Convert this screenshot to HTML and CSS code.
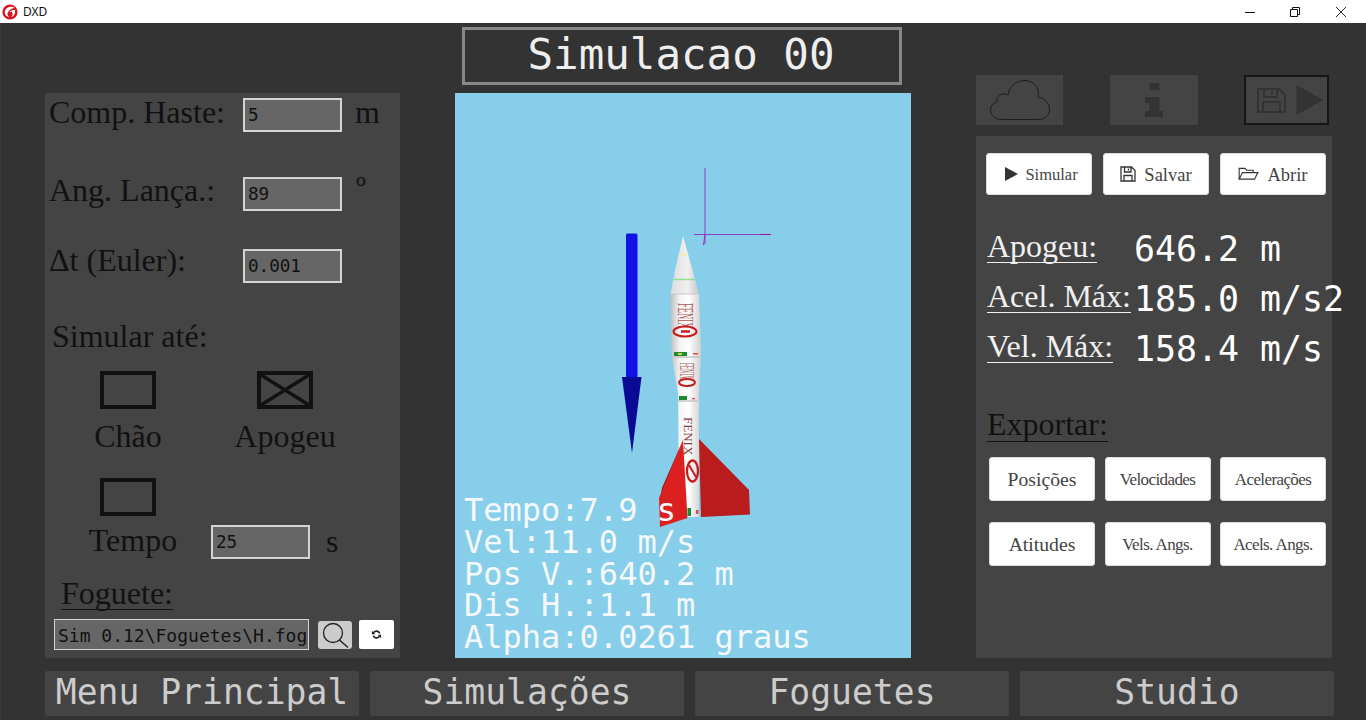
FILE: index.html
```html
<!DOCTYPE html>
<html lang="pt">
<head>
<meta charset="utf-8">
<title>DXD</title>
<link rel="stylesheet" href="styles.css">
</head>
<body>
<header class="titlebar">
  <svg class="app-logo" viewBox="0 0 16 16"><circle cx="8" cy="8" r="7.6" fill="#d8141c"/><path d="M12.500 3.300C8.500 1.600 3.400 3.600 2.800 7.800 2.500 10.500 4.400 12.800 7.200 13.300 5.500 11.700 5 9.700 6 8 7 6.100 9.600 4.900 12.500 3.300Z" fill="#fff"/><path d="M12.800 5.800C13.800 9 12.200 12.300 9 13.300 10.600 11.800 11 9.600 10.100 8 9.500 7.400 8 7.900 7 8.600 8.400 6.500 11 5.900 12.800 5.800Z" fill="#fff"/></svg>
  <span class="app-name">DXD</span>
  <div class="win-controls">
    <svg class="win-btn" viewBox="0 0 10 10"><path d="M0 5.500H10" stroke="#111" fill="none"/></svg>
    <svg class="win-btn" viewBox="0 0 10 10"><path d="M.5 2.500H7.500V9.500H.5ZM2.500 2.500V.5H9.500V7.500H7.500" stroke="#111" fill="none"/></svg>
    <svg class="win-btn win-close" viewBox="0 0 10 10"><path d="M0 0L10 10M10 0L0 10" stroke="#111" stroke-width=".9" fill="none"/></svg>
  </div>
</header>

<main class="app">
  <div class="columns">
    <section class="left-panel">
      <div class="field">
        <label class="field-label">Comp. Haste:</label>
        <div class="input">5</div>
        <span class="unit">m</span>
      </div>
      <div class="field field-angle">
        <label class="field-label">Ang. Lança.:</label>
        <div class="input">89</div>
        <span class="unit unit-deg">º</span>
      </div>
      <div class="field field-dt">
        <label class="field-label">Δt (Euler):</label>
        <div class="input">0.001</div>
      </div>
      <div class="sim-until">Simular até:</div>
      <div class="targets">
        <div class="target">
          <div class="check"></div>
          <div class="target-label">Chão</div>
        </div>
        <div class="target">
          <div class="check">
            <svg class="check-x" viewBox="0 0 48 30" preserveAspectRatio="none"><path d="M0 0L48 30M48 0L0 30" stroke="#111" stroke-width="3.600" fill="none"/></svg>
          </div>
          <div class="target-label">Apogeu</div>
        </div>
      </div>
      <div class="targets targets-time">
        <div class="target">
          <div class="check"></div>
          <div class="target-label target-label-time">Tempo</div>
        </div>
        <div class="input input-time">25</div>
        <span class="unit unit-s">s</span>
      </div>
      <div class="rocket-title"><span class="underlined">Foguete:</span></div>
      <div class="file-row">
        <div class="input input-file">Sim 0.12\Foguetes\H.fog</div>
        <button class="search-btn" type="button" aria-label="Procurar">
          <svg viewBox="0 0 34 28" width="34" height="28"><circle cx="15" cy="12" r="9.500" fill="none" stroke="#222" stroke-width="1.300"/><path d="M21.500 19L30 26.500" stroke="#222" stroke-width="1.500"/></svg>
        </button>
        <button class="refresh-btn" type="button" aria-label="Atualizar">
          <svg viewBox="0 0 12 12" width="11" height="11"><path d="M10.400 4.600A4.600 4.600 0 0 0 2.300 3.300L1 2v3.600h3.600L3.400 4.400A3 3 0 0 1 8.600 5ZM1.600 7.400A4.600 4.600 0 0 0 9.700 8.700L11 10V6.400H7.400L8.600 7.600A3 3 0 0 1 3.400 7Z" fill="#222"/></svg>
        </button>
      </div>
    </section>

    <section class="center">
      <h1 class="sim-title">Simulacao 00</h1>
      <div class="scene">
        <svg class="scene-art" viewBox="455 93 456 565">
          <defs>
            <linearGradient id="body" x1="0" x2="1" y1="0" y2="0">
              <stop offset="0" stop-color="#bdbdbd"/><stop offset=".3" stop-color="#f4f4f4"/><stop offset=".6" stop-color="#fff"/><stop offset="1" stop-color="#cfcfcf"/>
            </linearGradient>
            <linearGradient id="nose" x1="0" x2="1" y1="0" y2="0">
              <stop offset="0" stop-color="#dcdcdc"/><stop offset=".6" stop-color="#f0f0f0"/><stop offset="1" stop-color="#c8c8c8"/>
            </linearGradient>
          </defs>
          <path d="M705 168V244M694 234.500H771" stroke="#8c3fc0" stroke-width="1" fill="none"/>
          <path d="M705 234L703.500 245" stroke="#b020c0" fill="none"/>
          <path d="M760 234.500H771" stroke="#a01098" fill="none"/>
          <rect x="626" y="233.500" width="11.500" height="144" rx="1.500" fill="#1212e6"/>
          <path d="M622 377H641.500L632 453Z" fill="#0a0a94"/>
          <path d="M683 236L687 250 699 294H670.500L676 266Z" fill="url(#nose)"/>
          <path d="M680 254.500H687" stroke="#f0ee90" stroke-width="1.300"/>
          <path d="M673.500 279.500H695" stroke="#90e090" stroke-width="1.500"/>
          <path d="M670.500 294H699L701 350V355L699 393V517H679L678 393 671.500 355V350Z" fill="url(#body)"/>
          <path d="M670.500 294H699" stroke="#c8c8c8"/>
          <path d="M672 357H701M678 401H698" stroke="#c4c4c4" stroke-width="1.500"/>
          <text class="tex" transform="translate(678 303) rotate(90) scale(.36 1)">FENIX</text>
          <ellipse cx="685" cy="331.500" rx="11.500" ry="5" fill="none" stroke="#c81c1c" stroke-width="2"/>
          <path d="M681 331.500L690 331.500" stroke="#c81c1c" stroke-width="2.500"/>
          <text class="tex tex-mid" transform="translate(680 363) rotate(90) scale(.27 1)">FENIX</text>
          <ellipse cx="687" cy="382.500" rx="8" ry="3.500" fill="none" stroke="#c81c1c" stroke-width="2"/>
          <rect x="674" y="352" width="13" height="4" fill="#1c8c34"/>
          <rect x="678" y="353" width="4" height="2" fill="#d8d040"/>
          <rect x="679" y="396" width="8" height="4" fill="#1c8c34"/>
          <rect x="693" y="353" width="5" height="1.500" fill="#e04848"/>
          <rect x="692" y="398" width="3" height="1.300" fill="#e04848"/>
          <text class="tex tex-fenix" transform="translate(684 417) rotate(90)">FENIX</text>
          <ellipse cx="692.500" cy="471" rx="5.500" ry="10.500" fill="none" stroke="#c81c1c" stroke-width="2.300"/>
          <path d="M689 465L696 477" stroke="#c81c1c" stroke-width="2"/>
          <path d="M699 439L749 490 750 514.500 701 517Z" fill="#b81c1c"/>
          <path d="M683 440L662 488 660 500Z" fill="#8e1616"/>
          <path d="M683 440L687.500 518 660 527 659 498Z" fill="#dc2020"/>
          <rect x="687.500" y="508" width="3.500" height="8" fill="#1c8c34"/>
          <rect x="696" y="510" width="2.500" height="4" fill="#e04848"/>
        </svg>
        <div class="readout">
          <div>Tempo:7.9 s</div>
          <div>Vel:11.0 m/s</div>
          <div>Pos V.:640.2 m</div>
          <div>Dis H.:1.1 m</div>
          <div>Alpha:0.0261 graus</div>
        </div>
      </div>
    </section>

    <section class="right">
      <div class="tool-row">
        <div class="tool tool-cloud">
          <svg viewBox="0 0 60 40" width="60" height="40"><path d="M12 39.500C5 39.500 .5 35 .5 30 .5 26 3 23 7 22 6 18 9 14 14 14 16 14 17 14.500 18 15 19 6 27 .5 35 .5 44 .5 50 8 48 17 54 18 59.500 23 59.500 30 59.500 35 55 39.500 49 39.500Z" fill="none" stroke="#1c1c1c" stroke-width="1"/></svg>
        </div>
        <div class="tool tool-info">
          <svg viewBox="0 0 18 34" width="18" height="34"><path d="M4.300 0H14.300V7H4.300ZM0 14H14.300V28H18V34H0V28H4.300V20H0Z" fill="#333"/></svg>
        </div>
        <div class="tool tool-run">
          <svg viewBox="0 0 78 46" width="78" height="46"><path d="M10 12H31L37 18V35H10ZM16 12V20H29V12M24 14V18M15 35V25H32V35" fill="none" stroke="#333" stroke-width="2"/><path d="M48.500 8L75.500 23 48.500 38Z" fill="#333"/></svg>
        </div>
      </div>
      <div class="right-panel">
        <div class="actions">
          <button class="btn btn-sim" type="button">
            <svg viewBox="0 0 14 14" width="14" height="14"><path d="M1 0L14 7 1 14Z" fill="#333"/></svg>
            <span>Simular</span>
          </button>
          <button class="btn btn-act" type="button">
            <svg viewBox="0 0 16 16" width="16" height="16"><path d="M1 1H11.500L15 4.500V15H1ZM4.500 1V6H11V1M8.500 2.500V4.500M4 15V9.500H12V15" fill="none" stroke="#333" stroke-width="1.300"/></svg>
            <span>Salvar</span>
          </button>
          <button class="btn btn-act" type="button">
            <svg viewBox="0 0 22 15" width="21" height="14"><path d="M1 13V1.500H7L9 3.500H16V6M1 13L4.500 6H21L17.500 13Z" fill="none" stroke="#333" stroke-width="1.200"/></svg>
            <span>Abrir</span>
          </button>
        </div>
        <dl class="stats">
          <div class="stat"><dt><span class="underlined">Apogeu:</span></dt><dd>646.2 m</dd></div>
          <div class="stat"><dt><span class="underlined">Acel. Máx:</span></dt><dd>185.0 m/s2</dd></div>
          <div class="stat"><dt><span class="underlined">Vel. Máx:</span></dt><dd>158.4 m/s</dd></div>
        </dl>
        <div class="export-title"><span class="underlined">Exportar:</span></div>
        <div class="export-grid">
          <button class="btn btn-big" type="button">Posições</button>
          <button class="btn btn-small" type="button">Velocidades</button>
          <button class="btn btn-small" type="button">Acelerações</button>
          <button class="btn btn-big" type="button">Atitudes</button>
          <button class="btn btn-small" type="button">Vels. Angs.</button>
          <button class="btn btn-small" type="button">Acels. Angs.</button>
        </div>
      </div>
    </section>
  </div>

  <nav class="menu">
    <div class="menu-item">Menu Principal</div>
    <div class="menu-item">Simulações</div>
    <div class="menu-item">Foguetes</div>
    <div class="menu-item">Studio</div>
  </nav>
</main>
</body>
</html>
```

FILE: styles.css
```css
* { box-sizing: border-box; }
html, body { margin: 0; padding: 0; }
body {
  width: 1366px;
  height: 720px;
  overflow: hidden;
  background: #333;
  font-family: "Liberation Serif", serif;
  color: #111;
}

.titlebar {
  height: 23px;
  background: #fff;
  display: flex;
  align-items: center;
  padding-left: 2px;
}
.app-logo { width: 16px; height: 16px; }
.app-name {
  margin-left: 5px;
  font: 12px "Noto Sans", sans-serif;
  color: #111;
}
.win-controls {
  margin-left: auto;
  margin-right: 20px;
  display: flex;
  gap: 35px;
}
.win-btn { width: 10px; height: 10px; display: block; }
.win-close { margin-left: 1px; }

.app {
  height: 697px;
  padding-left: 45px;
  border-left: 1px solid #333c3c;
}
.columns { display: flex; height: 635px; margin-left: -1px; }

/* Left panel */
.left-panel {
  width: 355px;
  height: 565px;
  margin-top: 70px;
  padding-top: 5px;
  background: #444;
  font-size: 32px;
  line-height: 36px;
}
.field { display: flex; height: 34px; align-items: center; }
.field-angle { margin-top: 45px; }
.field-dt { margin-top: 38px; }
.field-label { width: 198px; padding-left: 4px; position: relative; top: -3px; }
.field-angle .field-label { top: -4px; }
.field-dt .field-label { top: -6px; }
.input {
  background: #666;
  border: 2px solid #d4d4d4;
  font: 17.600px/30px "DejaVu Sans Mono", monospace;
  color: #111;
  padding-left: 3px;
  width: 99px;
  height: 34px;
}
.unit { margin-left: 13px; position: relative; top: -3px; }
.unit-deg { top: -6px; margin-left: 14px; }
.sim-until { margin-top: 35px; padding-left: 7px; }

.targets { display: flex; gap: 57px; padding-left: 33px; margin-top: 17px; }
.target { width: 100px; display: flex; flex-direction: column; align-items: center; }
.check {
  width: 56px;
  height: 38px;
  border: 4px solid #111;
  position: relative;
}
.check-x { position: absolute; inset: 0; width: 100%; height: 100%; display: block; }
.target-label { margin-top: 9px; }
.target-label-time { margin-top: 6px; padding-left: 10px; }
.targets-time { gap: 0; margin-top: 24px; align-items: flex-end; }
.input-time { margin-left: 33px; margin-bottom: -1px; }
.unit-s { margin-left: 16px; top: 0; line-height: 34px; }

.rocket-title { margin-top: 19px; padding-left: 16px; line-height: 32px; height: 33px; }
.underlined { display: inline-block; border-bottom: 1px solid currentColor; }
.file-row { display: flex; align-items: center; margin-top: 9px; padding-left: 9px; }
.input-file {
  width: 255px;
  height: 31px;
  font-size: 18px;
  line-height: 31px;
  border-width: 1px;
  padding-left: 3px;
  white-space: nowrap;
  overflow: hidden;
}
.search-btn, .refresh-btn { border: 0; padding: 0; display: flex; align-items: center; justify-content: center; }
.search-btn { width: 34px; height: 28px; margin-left: 9px; background: #ccc; border-radius: 3px; }
.refresh-btn { width: 35px; height: 29px; margin-left: 7px; background: #fff; border-radius: 2px; }

/* Center */
.center { width: 456px; margin-left: 55px; }
.sim-title {
  margin: 4px 9px 8px 7px;
  height: 58px;
  border: 3px solid #888;
  padding-right: 2px;
  background: #333;
  color: #eee;
  font: 400 42.500px/50px "DejaVu Sans Mono", monospace;
  text-align: center;
}
.scene {
  position: relative;
  height: 565px;
  background: #87ceeb;
  display: flex;
  flex-direction: column;
  justify-content: flex-end;
  overflow: hidden;
}
.scene-art { position: absolute; inset: 0; width: 456px; height: 565px; }
.tex { font: 24px "Liberation Serif", serif; fill: #b05a5a; }
.tex-mid { font-size: 20px; }
.tex-fenix { font-size: 13px; fill: #8a3a3a; }
.readout {
  position: relative;
  padding: 0 0 4px 9px;
  font: 32px/31.800px "DejaVu Sans Mono", monospace;
  color: #f5f9fc;
  white-space: nowrap;
}

/* Right */
.right { width: 356px; margin-left: 65px; }
.tool-row { display: flex; margin-top: 52px; height: 50px; }
.tool { display: flex; align-items: center; justify-content: center; background: #444; height: 50px; }
.tool-cloud { width: 87px; }
.tool-info { width: 88px; margin-left: 47px; }
.tool-run { width: 85px; margin-left: 46px; border: 2px solid #161616; }
.right-panel {
  margin-top: 11px;
  height: 522px;
  background: #444;
  padding: 17px 0 0 10px;
  color: #f0f0f0;
}
.actions { display: flex; gap: 11px; }
.btn {
  width: 106px;
  height: 42px;
  background: #fff;
  border: 1px solid #ddd;
  border-radius: 3px;
  display: flex;
  align-items: center;
  justify-content: center;
  gap: 8px;
  padding: 0;
  color: #444;
  font: 18px "Liberation Serif", serif;
}
.btn span { position: relative; top: 1px; }
.btn-sim { font-size: 16.500px; gap: 7px; padding-left: 4px; }
.btn-act { font-size: 18.500px; }
.stats { margin: 18px 0 0; font-size: 32px; }
.stat { display: grid; grid-template-columns: 148px auto; align-items: end; height: 50px; width: 360px; }
.stat dt { color: #f0f0f0; line-height: 32px; padding-left: 1px; }
.stat dd {
  margin: 0 0 -4px;
  color: #fff;
  font: 34.900px/36px "DejaVu Sans Mono", monospace;
  white-space: nowrap;
}
.export-title { margin-top: 44px; padding-left: 1px; font-size: 32px; line-height: 34px; color: #111; }
.export-grid {
  display: grid;
  grid-template-columns: repeat(3, 106px);
  column-gap: 9.500px;
  row-gap: 21px;
  margin-top: 15px;
  padding-left: 3px;
}
.export-grid .btn { height: 44px; }
.btn-big { font-size: 19.700px; }
.btn-small { font-size: 17px; letter-spacing: -.6px; padding-top: 1px; }

/* Bottom menu */
.menu {
  display: grid;
  grid-template-columns: repeat(4, 314px);
  gap: 11px;
  margin: 13px 0 0 -1px;
}
.menu-item {
  height: 45px;
  background: #444;
  border-radius: 2px;
  color: #ccc;
  font: 34.700px/43px "DejaVu Sans Mono", monospace;
  text-align: center;
  white-space: nowrap;
}
```
